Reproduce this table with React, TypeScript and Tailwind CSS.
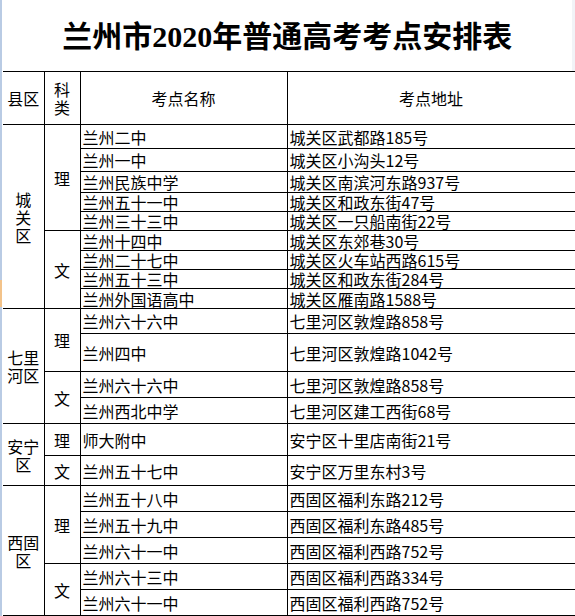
import React from "react";

type Row = { school: string; address: string; h: string };
type Group = { subject: string; rows: Row[] };
type District = { label: string[]; groups: Group[] };

const DISTRICTS: District[] = [
  {
    label: ["城", "关", "区"],
    groups: [
      {
        subject: "理",
        rows: [
          { school: "兰州二中", address: "城关区武都路185号", h: "h-[24px]" },
          { school: "兰州一中", address: "城关区小沟头12号", h: "h-[23px]" },
          { school: "兰州民族中学", address: "城关区南滨河东路937号", h: "h-[21px]" },
          { school: "兰州五十一中", address: "城关区和政东街47号", h: "h-[19px]" },
          { school: "兰州三十三中", address: "城关区一只船南街22号", h: "h-[19px]" },
        ],
      },
      {
        subject: "文",
        rows: [
          { school: "兰州十四中", address: "城关区东郊巷30号", h: "h-[20px]" },
          { school: "兰州二十七中", address: "城关区火车站西路615号", h: "h-[19px]" },
          { school: "兰州五十三中", address: "城关区和政东街284号", h: "h-[19px]" },
          { school: "兰州外国语高中", address: "城关区雁南路1588号", h: "h-[20px]" },
        ],
      },
    ],
  },
  {
    label: ["七里", "河区"],
    groups: [
      {
        subject: "理",
        rows: [
          { school: "兰州六十六中", address: "七里河区敦煌路858号", h: "h-[25px]" },
          { school: "兰州四中", address: "七里河区敦煌路1042号", h: "h-[38px]" },
        ],
      },
      {
        subject: "文",
        rows: [
          { school: "兰州六十六中", address: "七里河区敦煌路858号", h: "h-[26px]" },
          { school: "兰州西北中学", address: "七里河区建工西街68号", h: "h-[26px]" },
        ],
      },
    ],
  },
  {
    label: ["安宁", "区"],
    groups: [
      {
        subject: "理",
        rows: [{ school: "师大附中", address: "安宁区十里店南街21号", h: "h-[32px]" }],
      },
      {
        subject: "文",
        rows: [{ school: "兰州五十七中", address: "安宁区万里东村3号", h: "h-[30px]" }],
      },
    ],
  },
  {
    label: ["西固", "区"],
    groups: [
      {
        subject: "理",
        rows: [
          { school: "兰州五十八中", address: "西固区福利东路212号", h: "h-[26px]" },
          { school: "兰州五十九中", address: "西固区福利东路485号", h: "h-[26px]" },
          { school: "兰州六十一中", address: "西固区福利西路752号", h: "h-[26px]" },
        ],
      },
      {
        subject: "文",
        rows: [
          { school: "兰州六十三中", address: "西固区福利西路334号", h: "h-[26px]" },
          { school: "兰州六十一中", address: "西固区福利西路752号", h: "h-[26px]" },
        ],
      },
    ],
  },
];

const cell = "border border-black p-0 align-middle";

function TableBody() {
  const out: React.ReactNode[] = [];
  DISTRICTS.forEach((d, di) => {
    const total = d.groups.reduce((n, g) => n + g.rows.length, 0);
    d.groups.forEach((g, gi) => {
      g.rows.forEach((r, ri) => {
        out.push(
          <tr key={`${di}-${gi}-${ri}`} className={r.h}>
            {gi === 0 && ri === 0 && (
              <td rowSpan={total} className={`${cell} border-l-0 text-center leading-[18px]`}>
                {d.label.map((l) => (
                  <div key={l}>{l}</div>
                ))}
              </td>
            )}
            {ri === 0 && (
              <td rowSpan={g.rows.length} className={`${cell} text-center`}>
                {g.subject}
              </td>
            )}
            <td className={`${cell} px-[2px] whitespace-nowrap leading-[16px]`}>
              {r.school}
            </td>
            <td className={`${cell} px-[2px] whitespace-nowrap leading-[16px]`}>
              {r.address}
            </td>
          </tr>
        );
      });
    });
  });
  return <tbody>{out}</tbody>;
}

export default function App() {
  return (
    <div className="flex w-[575px] h-[616px] overflow-hidden bg-white text-black">
      {/* spreadsheet edge */}
      <div className="flex flex-col w-[2px] shrink-0">
        <div className="h-[280px] bg-[#b9cbe4]" />
        <div className="h-[27px] bg-[#f3c38a]" />
        <div className="flex-1 bg-[#b9cbe4]" />
      </div>

      <div className="flex flex-col flex-1 pl-[1px]">
        <div className="h-[72px] flex items-center justify-center border-r-[4px] border-[#f1f3f7] pt-[2px]">
          <h1 className="text-[30px] font-bold font-['Liberation_Serif','Noto_Sans_CJK_SC',serif]">
            兰州市2020年普通高考考点安排表
          </h1>
        </div>

        <table className="table-fixed border-collapse w-[572px] text-[16px] font-['Noto_Sans_CJK_SC',sans-serif]">
          <colgroup>
            <col className="w-[41px]" />
            <col className="w-[36px]" />
            <col className="w-[207px]" />
            <col className="w-[288px]" />
          </colgroup>
          <thead>
            <tr className="h-[53px]">
              <th className={`${cell} border-l-0 font-normal text-center`}>县区</th>
              <th className={`${cell} font-normal text-center leading-[18px]`}>
                <div>科</div>
                <div>类</div>
              </th>
              <th className={`${cell} font-normal text-center`}>考点名称</th>
              <th className={`${cell} font-normal text-center`}>考点地址</th>
            </tr>
          </thead>
          <TableBody />
        </table>
      </div>
    </div>
  );
}
